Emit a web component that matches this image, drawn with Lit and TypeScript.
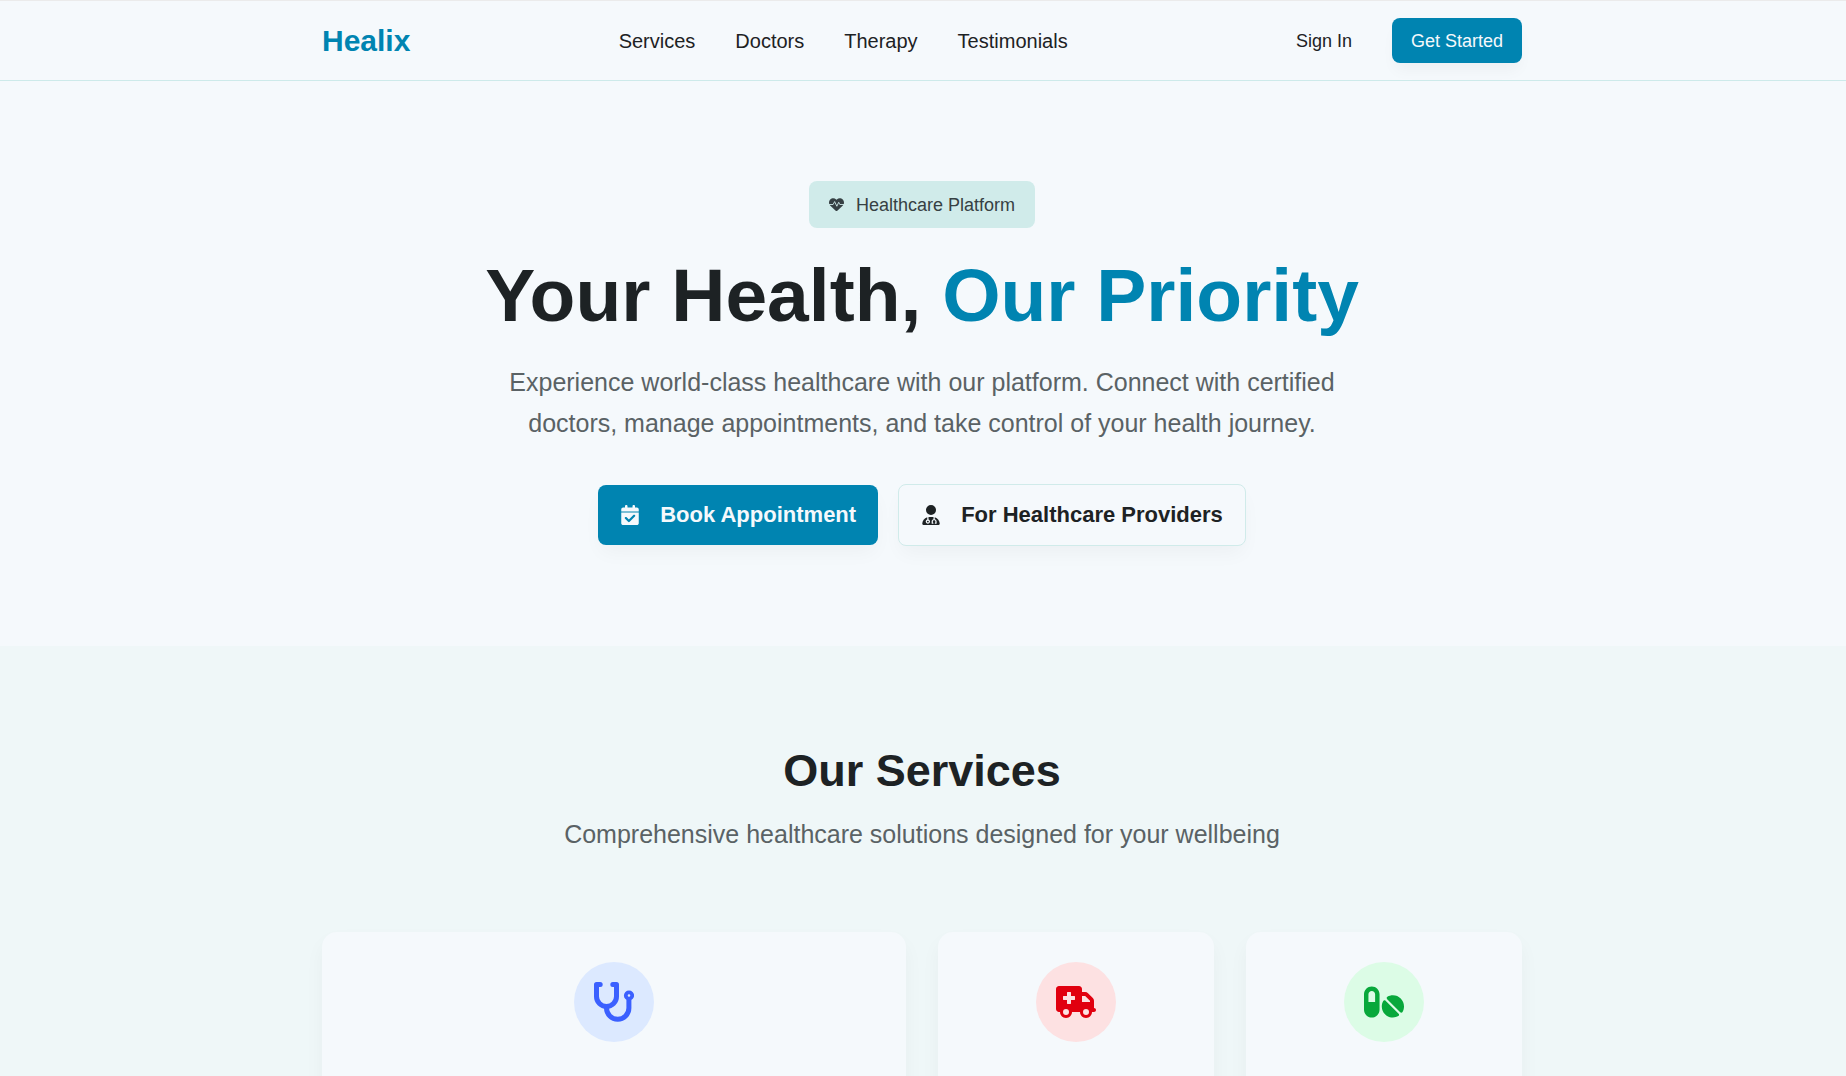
import { LitElement, html, css, svg } from "lit";
import { customElement, property } from "lit/decorators.js";

interface Glyph {
  box: string;
  d: string;
}

const glyphs: Record<string, Glyph> = {
  calendarCheck: {
    box: "0 0 448 512",
    d: "M128 0c17.7 0 32 14.3 32 32V64H288V32c0-17.7 14.3-32 32-32s32 14.3 32 32V64h48c26.5 0 48 21.5 48 48v56H0V112C0 85.5 21.5 64 48 64H96V32c0-17.7 14.3-32 32-32zM0 192H448V464c0 26.5-21.5 48-48 48H48c-26.5 0-48-21.5-48-48V192zM350 296c11.3-11.3 11.3-29.5 0-40.7s-29.5-11.3-40.7 0l-114 114-56.4-56.4c-11.3-11.3-29.5-11.3-40.7 0s-11.3 29.5 0 40.7l76.8 76.8c11.3 11.3 29.5 11.3 40.7 0L350 296z",
  },
  userDoctor: {
    box: "0 0 448 512",
    d: "M224 256A128 128 0 1 0 224 0a128 128 0 1 0 0 256zm-96 55.2C54 332.9 0 401.3 0 482.3C0 498.7 13.3 512 29.7 512H418.3c16.4 0 29.7-13.3 29.7-29.7c0-81-54-149.4-128-171.1V362c27.6 7.1 48 32.2 48 62v40c0 8.8-7.2 16-16 16H336c-8.8 0-16-7.2-16-16s7.2-16 16-16V424c0-17.7-14.3-32-32-32s-32 14.3-32 32v24c8.8 0 16 7.2 16 16s-7.2 16-16 16H256c-8.8 0-16-7.2-16-16V424c0-29.8 20.4-54.9 48-62V304.9c-6-.6-12.1-.9-18.3-.9H178.3c-6.2 0-12.3 .3-18.3 .9v65.4c23.1 6.9 40 28.3 40 53.7c0 30.9-25.1 56-56 56s-56-25.1-56-56c0-25.4 16.9-46.8 40-53.7V311.2zM144 448a24 24 0 1 0 0-48 24 24 0 1 0 0 48z",
  },
  ambulance: {
    box: "0 0 640 512",
    d: "M0 48C0 21.5 21.5 0 48 0H368c26.5 0 48 21.5 48 48V96h50.7c17 0 33.3 6.7 45.3 18.7L589.3 192c12 12 18.7 28.3 18.7 45.3V256v32 64c17.7 0 32 14.3 32 32s-14.3 32-32 32H576c0 53-43 96-96 96s-96-43-96-96H256c0 53-43 96-96 96s-96-43-96-96H48c-26.5 0-48-21.5-48-48V48zM416 256H544V237.3L466.7 160H416v96zM160 464a48 48 0 1 0 0-96 48 48 0 1 0 0 96zm368-48a48 48 0 1 0 -96 0 48 48 0 1 0 96 0zM184 96h48c4.4 0 8 3.6 8 8v56h56c4.4 0 8 3.6 8 8v48c0 4.4-3.6 8-8 8h-56v56c0 4.4-3.6 8-8 8h-48c-4.4 0-8-3.6-8-8v-56h-56c-4.4 0-8-3.6-8-8v-48c0-4.4 3.6-8 8-8h56v-56c0-4.4 3.6-8 8-8z",
  },
  pills: {
    box: "0 0 576 512",
    d: "M112 96c-26.5 0-48 21.5-48 48V256h96V144c0-26.5-21.5-48-48-48zM0 144C0 82.1 50.1 32 112 32s112 50.1 112 112V368c0 61.9-50.1 112-112 112S0 429.9 0 368V144zM554.9 399.4c-7.1 12.3-23.7 13.1-33.8 3.1L333.5 214.9c-10-10-9.3-26.7 3.1-33.8C360 167.7 387.1 160 416 160c88.4 0 160 71.6 160 160c0 28.9-7.7 56-21.1 79.4zm-59.5 59.5C472 472.3 444.9 480 416 480c-88.4 0-160-71.6-160-160c0-28.9 7.7-56 21.1-79.4c7.1-12.3 23.7-13.1 33.8-3.1L498.5 425.1c10 10 9.3 26.7-3.1 33.8z",
  },
};

@customElement("healix-icon")
export class HealixIcon extends LitElement {
  @property() name = "";

  static styles = css`
    :host {
      display: block;
      flex: none;
    }
    svg {
      display: block;
      width: 100%;
      height: 100%;
    }
  `;

  render() {
    if (this.name === "heartPulse") {
      return html`<svg viewBox="0 0 512 512" fill="currentColor" aria-hidden="true">
        ${svg`
          <path d="M47.6 300.4L228.3 469.1c7.5 7 17.4 10.9 27.7 10.9s20.2-3.9 27.7-10.9L464.4 300.4c30.4-28.3 47.6-68 47.6-109.5v-5.8c0-69.9-50.5-129.5-119.4-141C347 36.5 300.6 51.4 268 84L256 96 244 84c-32.6-32.6-79-47.5-124.6-39.9C50.5 55.6 0 115.2 0 185.1v5.8c0 41.5 17.2 81.2 47.6 109.5z" />
          <path d="M0 256h140l52-100 76 160 64-136 38 76h142" fill="none" stroke="#d0ebea" stroke-width="30" stroke-linejoin="round" />
        `}
      </svg>`;
    }
    if (this.name === "stethoscope") {
      return html`<svg viewBox="0 0 40 40" fill="none" stroke="currentColor" stroke-width="5" aria-hidden="true">
        ${svg`
          <path stroke-linecap="round" stroke-linejoin="round" d="M6.2 2.6H2.5V14.5a10 10 0 0 0 20 0V2.6H18.8" />
          <path d="M12.5 25.5v.5a11.2 11.2 0 0 0 22.4 0V16" />
          <circle cx="35" cy="13.5" r="3.2" stroke-width="3.8" />
        `}
      </svg>`;
    }
    const glyph = glyphs[this.name];
    return glyph
      ? html`<svg viewBox=${glyph.box} fill="currentColor" fill-rule="evenodd" aria-hidden="true">
          <path d=${glyph.d}></path>
        </svg>`
      : null;
  }
}

@customElement("app-root")
export class AppRoot extends LitElement {
  private links = ["Services", "Doctors", "Therapy", "Testimonials"];

  private services = [
    { icon: "stethoscope", tone: "blue" },
    { icon: "ambulance", tone: "red" },
    { icon: "pills", tone: "green" },
  ];

  static styles = css`
    :host {
      display: block;
      height: 100vh;
      overflow: hidden;
      background: #f5f9fc;
      color: #1d2224;
      font-family: "Liberation Sans", Arial, sans-serif;
      font-size: 20px;
      line-height: 30px;
    }
    * {
      box-sizing: border-box;
    }
    h1,
    h2,
    p {
      margin: 0;
    }
    a {
      color: inherit;
      text-decoration: none;
    }
    button {
      font: inherit;
      color: inherit;
      border: 0;
      background: none;
      cursor: pointer;
    }
    .container {
      max-width: 1200px;
      margin: 0 auto;
    }
    .header {
      padding: 0 22px 0 20px;
      border-top: 1px solid #ebebeb;
      border-bottom: 1px solid #cdeaea;
    }
    .bar {
      display: flex;
      align-items: center;
      justify-content: space-between;
      height: 79px;
    }
    .logo {
      font-size: 30px;
      font-weight: 700;
      color: #0084b1;
    }
    .nav {
      display: flex;
      align-items: center;
      gap: 40px;
    }
    .account {
      display: flex;
      align-items: center;
      gap: 20px;
      font-size: 18px;
    }
    .sign-in {
      padding: 0 20px;
    }
    .start {
      height: 45px;
      padding: 0 19px;
      border-radius: 8px;
      background: #0084b1;
      color: #f5f9fc;
      box-shadow: 0 10px 15px -3px rgba(0, 0, 0, 0.04);
    }
    .hero {
      display: flex;
      flex-direction: column;
      align-items: center;
      padding: 100px 22px 100px 20px;
      text-align: center;
    }
    .badge {
      display: flex;
      align-items: center;
      gap: 12px;
      height: 47px;
      padding: 0 20px;
      border-radius: 8px;
      background: #d0ebea;
      color: #364043;
      font-size: 18px;
    }
    .badge healix-icon {
      width: 15px;
      height: 15px;
    }
    .title {
      margin-top: 30px;
      font-size: 75px;
      line-height: 74px;
      font-weight: 700;
    }
    .accent {
      color: #0084b1;
    }
    .lead {
      max-width: 840px;
      margin-top: 30px;
      font-size: 25px;
      line-height: 41px;
      color: #5a6265;
    }
    .actions {
      display: flex;
      flex-wrap: wrap;
      align-items: center;
      justify-content: center;
      gap: 20px;
      margin-top: 40px;
    }
    .action {
      display: flex;
      align-items: center;
      gap: 20px;
      height: 60px;
      padding: 0 22px;
      border-radius: 8px;
      font-size: 22px;
      font-weight: 700;
      box-shadow: 0 10px 20px -3px rgba(0, 0, 0, 0.04);
    }
    .action healix-icon {
      width: 20px;
      height: 20px;
    }
    .primary {
      background: #0084b1;
      color: #f5f9fc;
    }
    .secondary {
      height: 62px;
      border: 1px solid #d0ebea;
      background: #f5f9fc;
    }
    .services {
      padding: 100px 22px 100px 20px;
      background: #eff7f8;
    }
    .intro {
      text-align: center;
    }
    .heading {
      font-size: 45px;
      line-height: 50px;
      font-weight: 700;
    }
    .sub {
      margin-top: 20px;
      font-size: 25px;
      line-height: 36px;
      color: #5a6265;
    }
    .cards {
      display: grid;
      grid-template-columns: repeat(4, 1fr);
      gap: 32px;
      margin-top: 80px;
    }
    .card {
      display: flex;
      justify-content: center;
      min-height: 300px;
      padding: 30px;
      border-radius: 15px;
      background: #f5f9fc;
      box-shadow: 0 10px 20px rgba(0, 0, 0, 0.04);
    }
    .card:first-child {
      grid-column: span 2;
    }
    .disc {
      display: grid;
      place-items: center;
      width: 80px;
      height: 80px;
      border-radius: 50%;
    }
    .disc healix-icon {
      width: 40px;
      height: 40px;
    }
    .blue {
      background: #dce9ff;
      color: #3b60ff;
    }
    .red {
      background: #fde1e2;
      color: #e1000f;
    }
    .green {
      background: #dcfce6;
      color: #08a83b;
    }
  `;

  render() {
    return html`
      <header class="header">
        <div class="container bar">
          <a class="logo" href="#">Healix</a>
          <nav class="nav">${this.links.map((t) => html`<a href="#${t.toLowerCase()}">${t}</a>`)}</nav>
          <div class="account">
            <a class="sign-in" href="#sign-in">Sign In</a>
            <button class="start">Get Started</button>
          </div>
        </div>
      </header>
      <main>
        <section class="hero">
          <div class="badge"><healix-icon name="heartPulse"></healix-icon><span>Healthcare Platform</span></div>
          <h1 class="title">Your Health, <span class="accent">Our Priority</span></h1>
          <p class="lead">
            Experience world-class healthcare with our platform. Connect with certified doctors, manage
            appointments, and take control of your health journey.
          </p>
          <div class="actions">
            <button class="action primary"><healix-icon name="calendarCheck"></healix-icon>Book Appointment</button>
            <button class="action secondary"><healix-icon name="userDoctor"></healix-icon>For Healthcare Providers</button>
          </div>
        </section>
        <section class="services" id="services">
          <div class="intro">
            <h2 class="heading">Our Services</h2>
            <p class="sub">Comprehensive healthcare solutions designed for your wellbeing</p>
          </div>
          <div class="container cards">
            ${this.services.map(
              (s) => html`<article class="card">
                <div class="disc ${s.tone}"><healix-icon name=${s.icon}></healix-icon></div>
              </article>`
            )}
          </div>
        </section>
      </main>
    `;
  }
}
